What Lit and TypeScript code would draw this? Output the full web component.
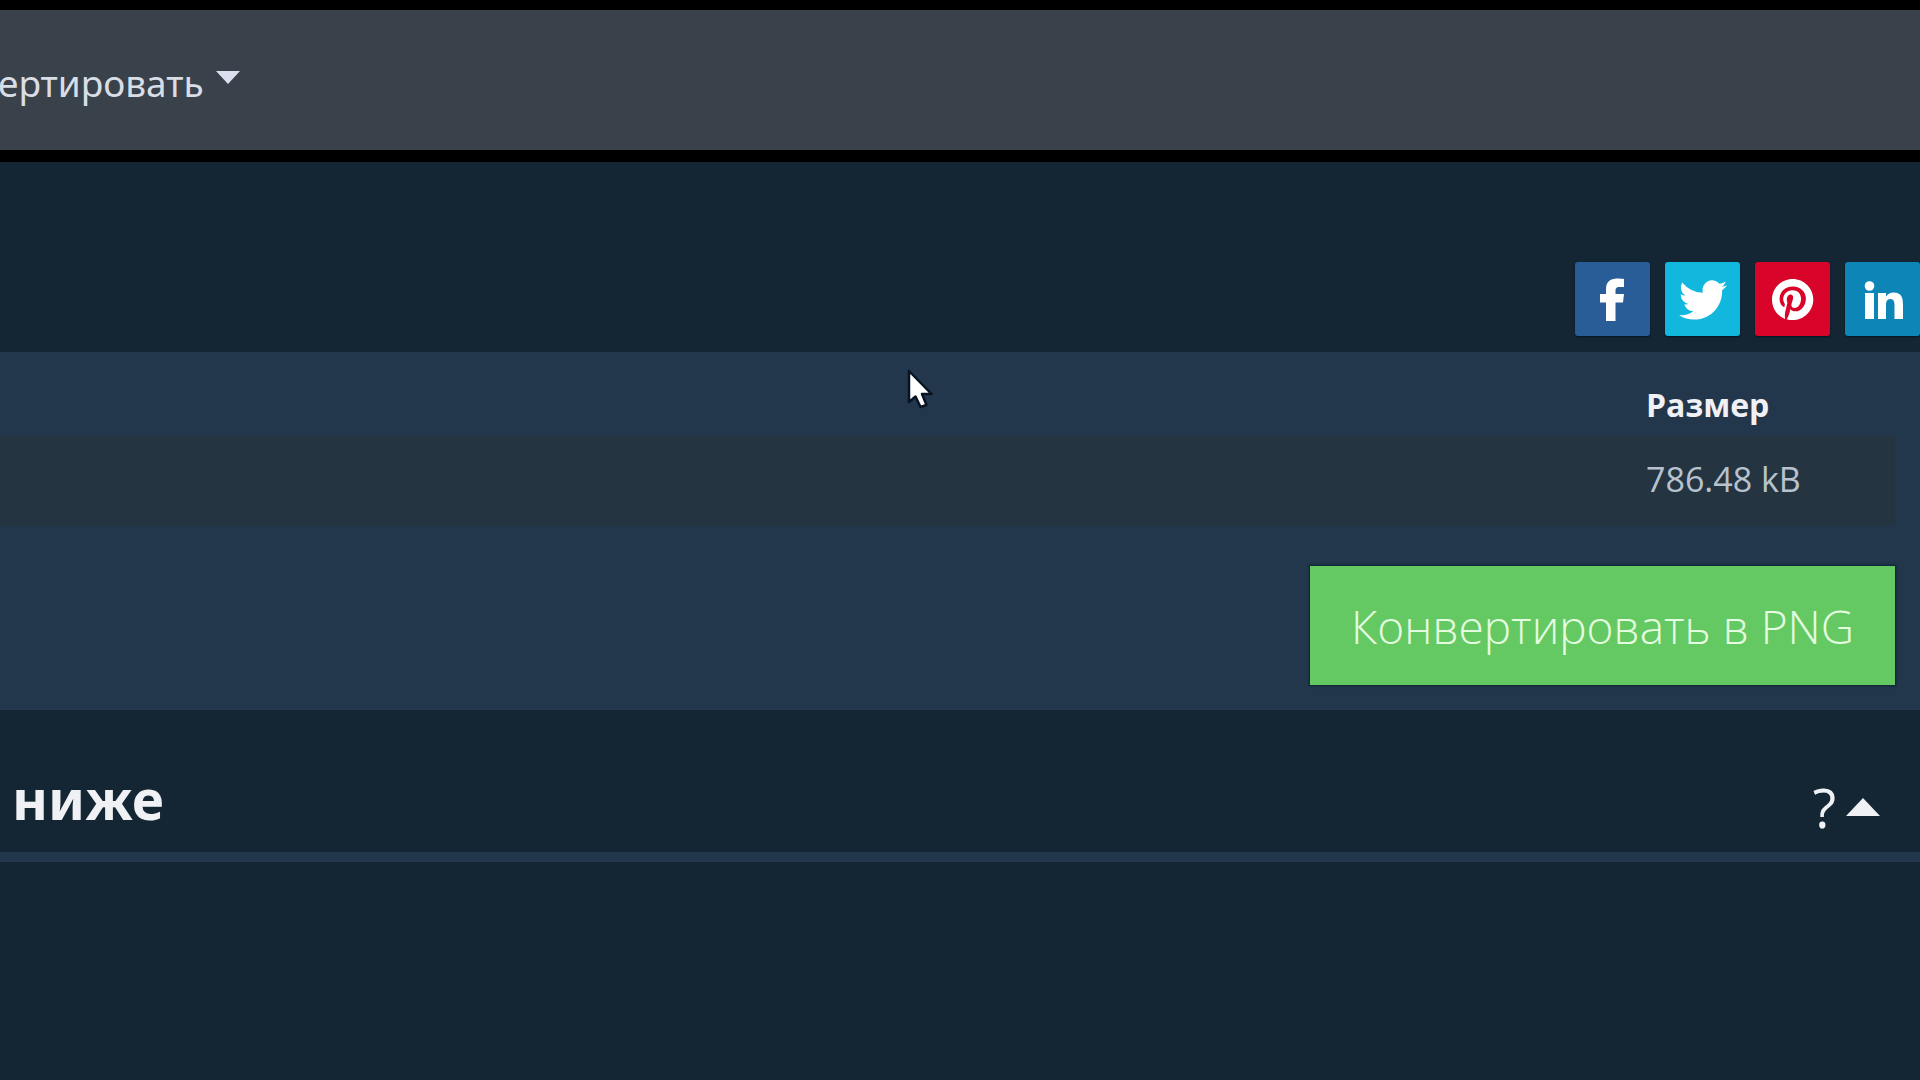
import { LitElement, html, css, svg } from "lit";
import { customElement } from "lit/decorators.js";

const shares = [
  {
    name: "Facebook",
    cls: "facebook",
    icon: svg`<path d="M31 59V40.500H25V32H31V27.500C31 20 35 16.500 42 16.500C45 16.500 47.500 16.800 49 17V25H44.500C41 25 40.500 26.800 40.500 29V32H49L48 40.500H40.500V59Z"/>`,
  },
  {
    name: "Twitter",
    cls: "twitter",
    icon: svg`<g transform="translate(13 13) scale(2.080)"><path d="M23.600 4.900a9.500 9.500 0 0 1-2.700.8 4.700 4.700 0 0 0 2.100-2.600 9.600 9.600 0 0 1-3 1.100 4.700 4.700 0 0 0-8.100 4.300A13.500 13.500 0 0 1 2 3.600a4.700 4.700 0 0 0 1.500 6.300 4.800 4.800 0 0 1-2.200-.6v.1a4.700 4.700 0 0 0 3.800 4.600 4.800 4.800 0 0 1-2.100.1 4.700 4.700 0 0 0 4.400 3.300A9.600 9.600 0 0 1 .500 19.300a13.500 13.500 0 0 0 7.300 2.100c8.700 0 13.700-7.300 13.400-14.100a9.700 9.700 0 0 0 2.400-2.400z"/></g>`,
  },
  {
    name: "Pinterest",
    cls: "pinterest",
    icon: svg`<g transform="translate(17 17) scale(1.720)"><path d="M12 0C5.400 0 0 5.400 0 12c0 5.100 3.100 9.400 7.600 11.200-.1-.9-.2-2.400 0-3.500.2-.9 1.400-6 1.400-6s-.4-.7-.4-1.800c0-1.700 1-2.900 2.200-2.900 1 0 1.500.8 1.500 1.700 0 1-.7 2.600-1 4-.3 1.200.6 2.200 1.800 2.200 2.100 0 3.800-2.200 3.800-5.500 0-2.900-2.100-4.900-5-4.900-3.400 0-5.400 2.600-5.400 5.200 0 1 .4 2.100.9 2.700.1.100.1.200.1.300l-.3 1.400c-.1.200-.2.300-.4.200-1.500-.7-2.400-2.900-2.400-4.600 0-3.800 2.700-7.300 7.900-7.300 4.200 0 7.400 3 7.400 6.900 0 4.100-2.600 7.500-6.200 7.500-1.200 0-2.400-.6-2.800-1.400l-.7 2.900c-.3 1-1 2.300-1.500 3.100 1.100.4 2.300.5 3.500.5 6.600 0 12-5.400 12-12S18.600 0 12 0z"/></g>`,
  },
  {
    name: "LinkedIn",
    cls: "linkedin",
    icon: svg`<circle cx="24.500" cy="24" r="4.800"/><path d="M20 31h9v26h-9zM33 31H41v3.600c1.200-2.200 4-4.200 7.500-4.200 8 0 9.500 5.300 9.500 12.100V57h-8.500V44c0-3 0-7-4-7s-4.500 3.400-4.500 6.800V57h-8z"/>`,
  },
];

@customElement("app-root")
export class AppRoot extends LitElement {
  static styles = css`
    :host {
      display: block;
      min-height: 100vh;
      overflow: hidden;
      background: #142634;
      color: #f0f1f5;
      font-family: "Open Sans", "Noto Sans", sans-serif;
    }
    .nav {
      display: flex;
      align-items: center;
      box-sizing: border-box;
      height: 162px;
      padding-top: 6px;
      border-top: 10px solid #000;
      border-bottom: 12px solid #000;
      background: #39424a;
    }
    .menu {
      display: flex;
      align-items: center;
      gap: 12px;
      margin: 0 0 0 -2px;
      padding: 0;
      border: 0;
      background: none;
      color: #d9dde6;
      font: 400 37px/48px "Noto Sans", sans-serif;
    }
    .menu svg {
      width: 24px;
      height: 13px;
      margin-bottom: 12px;
      fill: #dcdfee;
    }
    .shares {
      display: flex;
      justify-content: flex-end;
      gap: 15px;
      padding: 100px 0 16px;
    }
    .share {
      width: 75px;
      height: 74px;
      border-radius: 3px;
      box-shadow: 0 1px 2px #061325;
    }
    .share svg {
      display: block;
      width: 75px;
      height: 75px;
      fill: #fff;
    }
    .facebook { background: #285d98; }
    .twitter { background: #11b7dc; }
    .pinterest { background: #d90429; }
    .linkedin { background: #0d85b7; }
    .panel {
      padding: 20px 25px 25px 0;
      background: #22374c;
    }
    .files {
      width: 100%;
      border-collapse: collapse;
      table-layout: fixed;
      text-align: left;
    }
    .files th { padding: 2px 0 0; }
    .files td { padding: 0 0 4px; }
    .files th {
      box-sizing: border-box;
      height: 64px;
      font-size: 32px;
      line-height: 48px;
      font-weight: 700;
    }
    .files td {
      box-sizing: border-box;
      height: 90px;
      background: #243441;
      color: #b8c2ce;
      font-size: 34px;
      line-height: 48px;
    }
    .files .size { width: 249px; }
    .actions {
      display: flex;
      justify-content: flex-end;
      padding-top: 40px;
    }
    .convert {
      height: 119px;
      padding: 0 41px;
      border: 0;
      background: #64c962;
      box-shadow: 0 0 2px 1px #0a2230;
      color: #e4fde0;
      font: 300 46px/64px "Open Sans", "Noto Sans", sans-serif;
      white-space: nowrap;
    }
    .section {
      display: flex;
      align-items: center;
      justify-content: space-between;
      box-sizing: border-box;
      height: 152px;
      padding: 36px 40px 0 12px;
      border-bottom: 10px solid #22374c;
    }
    .title {
      margin: 0;
      font: 700 55px/72px "Noto Sans", sans-serif;
    }
    .help {
      display: flex;
      align-items: center;
      gap: 10px;
      padding: 16px 0 0;
      border: 0;
      background: none;
      color: #f0f1f5;
      font: 400 54px/72px "Open Sans", sans-serif;
    }
    .help svg {
      width: 34px;
      height: 18px;
      fill: #f0f1f5;
    }
    .pointer {
      position: absolute;
      left: 906px;
      top: 368px;
      width: 30px;
      height: 43px;
    }
  `;

  render() {
    return html`
      <nav class="nav">
        <button class="menu" type="button">
          ертировать
          <svg viewBox="0 0 24 13" aria-hidden="true"><path d="M0 0H24L12 13Z" /></svg>
        </button>
      </nav>
      <main>
        <div class="shares">
          ${shares.map(
            (s) => html`<a class="share ${s.cls}" href="#" aria-label=${s.name}>
              <svg viewBox="0 0 75 75" aria-hidden="true">${s.icon}</svg>
            </a>`
          )}
        </div>
        <section class="panel">
          <table class="files">
            <thead>
              <tr><th></th><th class="size" scope="col">Размер</th></tr>
            </thead>
            <tbody>
              <tr><td></td><td>786.48 kB</td></tr>
            </tbody>
          </table>
          <div class="actions">
            <button class="convert" type="button">Конвертировать в PNG</button>
          </div>
        </section>
        <header class="section">
          <h2 class="title">ниже</h2>
          <button class="help" type="button">
            ?
            <svg viewBox="0 0 34 18" aria-hidden="true"><path d="M0 18L17 0L34 18Z" /></svg>
          </button>
        </header>
      </main>
      <svg class="pointer" viewBox="0 0 30 43" aria-hidden="true">
        <path
          d="M3 3V34L9.500 28.500L14.500 39L20.500 37L16 26H25.500Z"
          fill="#fff"
          stroke="#071321"
          stroke-width="2.500"
          stroke-linejoin="round"
        />
      </svg>
    `;
  }
}
